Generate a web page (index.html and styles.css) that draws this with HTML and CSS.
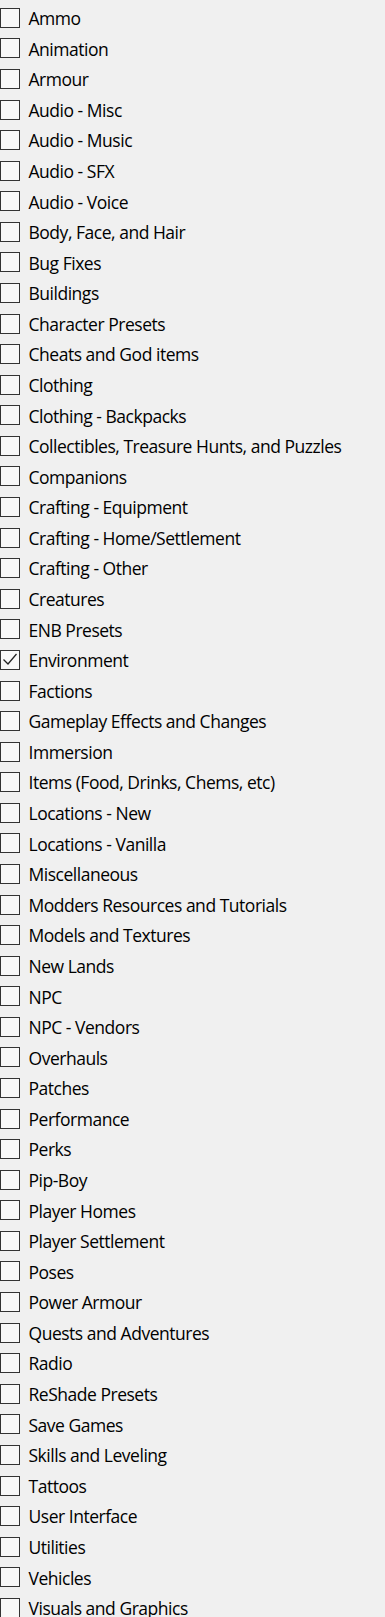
FILE: index.html
```html
<!DOCTYPE html>
<html>
<head>
<meta charset="utf-8">
<link rel="stylesheet" href="styles.css">
</head>
<body>
<ul class="list">
<li class="item"><span class="box"></span><span class="label">Ammo</span></li>
<li class="item"><span class="box"></span><span class="label">Animation</span></li>
<li class="item"><span class="box"></span><span class="label">Armour</span></li>
<li class="item"><span class="box"></span><span class="label">Audio - Misc</span></li>
<li class="item"><span class="box"></span><span class="label">Audio - Music</span></li>
<li class="item"><span class="box"></span><span class="label">Audio - SFX</span></li>
<li class="item"><span class="box"></span><span class="label">Audio - Voice</span></li>
<li class="item"><span class="box"></span><span class="label">Body, Face, and Hair</span></li>
<li class="item"><span class="box"></span><span class="label">Bug Fixes</span></li>
<li class="item"><span class="box"></span><span class="label">Buildings</span></li>
<li class="item"><span class="box"></span><span class="label">Character Presets</span></li>
<li class="item"><span class="box"></span><span class="label">Cheats and God items</span></li>
<li class="item"><span class="box"></span><span class="label">Clothing</span></li>
<li class="item"><span class="box"></span><span class="label">Clothing - Backpacks</span></li>
<li class="item"><span class="box"></span><span class="label">Collectibles, Treasure Hunts, and Puzzles</span></li>
<li class="item"><span class="box"></span><span class="label">Companions</span></li>
<li class="item"><span class="box"></span><span class="label">Crafting - Equipment</span></li>
<li class="item"><span class="box"></span><span class="label">Crafting - Home/Settlement</span></li>
<li class="item"><span class="box"></span><span class="label">Crafting - Other</span></li>
<li class="item"><span class="box"></span><span class="label">Creatures</span></li>
<li class="item"><span class="box"></span><span class="label">ENB Presets</span></li>
<li class="item"><span class="box checked"><svg viewBox="0 0 20 20" width="20" height="20"><path d="M3.5 10.5 L8 15 L16.5 5" fill="none" stroke="#222" stroke-width="1.3"/></svg></span><span class="label">Environment</span></li>
<li class="item"><span class="box"></span><span class="label">Factions</span></li>
<li class="item"><span class="box"></span><span class="label">Gameplay Effects and Changes</span></li>
<li class="item"><span class="box"></span><span class="label">Immersion</span></li>
<li class="item"><span class="box"></span><span class="label">Items (Food, Drinks, Chems, etc)</span></li>
<li class="item"><span class="box"></span><span class="label">Locations - New</span></li>
<li class="item"><span class="box"></span><span class="label">Locations - Vanilla</span></li>
<li class="item"><span class="box"></span><span class="label">Miscellaneous</span></li>
<li class="item"><span class="box"></span><span class="label">Modders Resources and Tutorials</span></li>
<li class="item"><span class="box"></span><span class="label">Models and Textures</span></li>
<li class="item"><span class="box"></span><span class="label">New Lands</span></li>
<li class="item"><span class="box"></span><span class="label">NPC</span></li>
<li class="item"><span class="box"></span><span class="label">NPC - Vendors</span></li>
<li class="item"><span class="box"></span><span class="label">Overhauls</span></li>
<li class="item"><span class="box"></span><span class="label">Patches</span></li>
<li class="item"><span class="box"></span><span class="label">Performance</span></li>
<li class="item"><span class="box"></span><span class="label">Perks</span></li>
<li class="item"><span class="box"></span><span class="label">Pip-Boy</span></li>
<li class="item"><span class="box"></span><span class="label">Player Homes</span></li>
<li class="item"><span class="box"></span><span class="label">Player Settlement</span></li>
<li class="item"><span class="box"></span><span class="label">Poses</span></li>
<li class="item"><span class="box"></span><span class="label">Power Armour</span></li>
<li class="item"><span class="box"></span><span class="label">Quests and Adventures</span></li>
<li class="item"><span class="box"></span><span class="label">Radio</span></li>
<li class="item"><span class="box"></span><span class="label">ReShade Presets</span></li>
<li class="item"><span class="box"></span><span class="label">Save Games</span></li>
<li class="item"><span class="box"></span><span class="label">Skills and Leveling</span></li>
<li class="item"><span class="box"></span><span class="label">Tattoos</span></li>
<li class="item"><span class="box"></span><span class="label">User Interface</span></li>
<li class="item"><span class="box"></span><span class="label">Utilities</span></li>
<li class="item"><span class="box"></span><span class="label">Vehicles</span></li>
<li class="item"><span class="box"></span><span class="label">Visuals and Graphics</span></li>
</ul>
</body>
</html>
```

FILE: styles.css
```css
html, body {
  margin: 0;
  padding: 0;
  background: #f0f0f0;
  overflow: hidden;
}
.list {
  list-style: none;
  margin: 0;
  padding: 2.5px 0 0 0;
  font-family: "Open Sans", "Noto Sans", sans-serif;
  font-size: 17.5px;
  letter-spacing: -0.48px;
  color: #000;
}
.item {
  display: flex;
  align-items: center;
  height: 30.58px;
}
.box {
  box-sizing: border-box;
  width: 20px;
  height: 20px;
  border: 1.5px solid #333;
  background: #f8f8f8;
  flex: none;
  display: flex;
}
.box svg {
  margin: -1.5px;
}
.label {
  margin-left: 8.5px;
  padding-top: 2px;
  white-space: nowrap;
  line-height: 1;
}
```
